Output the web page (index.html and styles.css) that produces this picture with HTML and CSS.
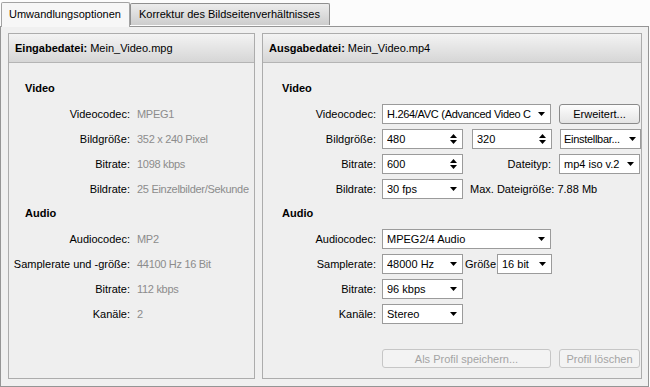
FILE: index.html
```html
<!DOCTYPE html>
<html lang="de">
<head>
  <meta charset="UTF-8" />
  <title>Umwandlungsoptionen</title>
  <link rel="stylesheet" href="styles.css">
</head>
<body>
  <!-- Tab strip -->
  <div class="tabs">
    <div class="tab active">Umwandlungsoptionen</div>
    <div class="tab">Korrektur des Bildseitenverhältnisses</div>
  </div>

  <div class="panel">
    <!-- Input file -->
    <section class="group group-in">
      <div class="group-head"><b>Eingabedatei:</b> Mein_Video.mpg</div>
      <div class="group-body">
        <div class="heading">Video</div>
        <div class="row"><span class="label">Videocodec:</span><span class="value">MPEG1</span></div>
        <div class="row"><span class="label">Bildgröße:</span><span class="value">352 x 240 Pixel</span></div>
        <div class="row"><span class="label">Bitrate:</span><span class="value">1098 kbps</span></div>
        <div class="row"><span class="label">Bildrate:</span><span class="value">25 Einzelbilder/Sekunde</span></div>
        <div class="heading">Audio</div>
        <div class="row"><span class="label">Audiocodec:</span><span class="value">MP2</span></div>
        <div class="row"><span class="label">Samplerate und -größe:</span><span class="value">44100 Hz 16 Bit</span></div>
        <div class="row"><span class="label">Bitrate:</span><span class="value">112 kbps</span></div>
        <div class="row"><span class="label">Kanäle:</span><span class="value">2</span></div>
      </div>
    </section>

    <!-- Output file -->
    <section class="group group-out">
      <div class="group-head"><b>Ausgabedatei:</b> Mein_Video.mp4</div>
      <div class="group-body">
        <div class="heading">Video</div>
        <div class="row">
          <span class="label">Videocodec:</span>
          <div class="controls">
            <div class="select w-wide"><span class="sel-text condensed">H.264/AVC (Advanced Video C</span><svg class="arrow" width="7" height="4"><path d="M0 0h7L3.5 4z"/></svg></div>
            <button class="btn w-btn">Erweitert...</button>
          </div>
        </div>
        <div class="row">
          <span class="label">Bildgröße:</span>
          <div class="controls">
            <div class="spin w-small"><span class="sel-text">480</span><span class="spin-arrows"><svg width="7" height="4"><path d="M3.5 0L7 4H0z"/></svg><svg width="7" height="4"><path d="M0 0h7L3.5 4z"/></svg></span></div>
            <div class="spin w-small2"><span class="sel-text">320</span><span class="spin-arrows"><svg width="7" height="4"><path d="M3.5 0L7 4H0z"/></svg><svg width="7" height="4"><path d="M0 0h7L3.5 4z"/></svg></span></div>
            <div class="select w-btn snug"><span class="sel-text condensed">Einstellbar...</span><svg class="arrow" width="7" height="4"><path d="M0 0h7L3.5 4z"/></svg></div>
          </div>
        </div>
        <div class="row">
          <span class="label">Bitrate:</span>
          <div class="controls">
            <div class="spin w-small"><span class="sel-text">600</span><span class="spin-arrows"><svg width="7" height="4"><path d="M3.5 0L7 4H0z"/></svg><svg width="7" height="4"><path d="M0 0h7L3.5 4z"/></svg></span></div>
            <span class="side-label">Dateityp:</span>
            <div class="select w-btn"><span class="sel-text">mp4 iso v.2</span><svg class="arrow" width="7" height="4"><path d="M0 0h7L3.5 4z"/></svg></div>
          </div>
        </div>
        <div class="row">
          <span class="label">Bildrate:</span>
          <div class="controls">
            <div class="select w-small"><span class="sel-text">30 fps</span><svg class="arrow" width="7" height="4"><path d="M0 0h7L3.5 4z"/></svg></div>
            <span class="note">Max. Dateigröße: 7.88 Mb</span>
          </div>
        </div>
        <div class="heading">Audio</div>
        <div class="row">
          <span class="label">Audiocodec:</span>
          <div class="controls">
            <div class="select w-wide"><span class="sel-text">MPEG2/4 Audio</span><svg class="arrow" width="7" height="4"><path d="M0 0h7L3.5 4z"/></svg></div>
          </div>
        </div>
        <div class="row">
          <span class="label">Samplerate:</span>
          <div class="controls tight">
            <div class="select w-small"><span class="sel-text">48000 Hz</span><svg class="arrow" width="7" height="4"><path d="M0 0h7L3.5 4z"/></svg></div>
            <span class="inline-label">Größe</span>
            <div class="select w-bits"><span class="sel-text">16 bit</span><svg class="arrow" width="7" height="4"><path d="M0 0h7L3.5 4z"/></svg></div>
          </div>
        </div>
        <div class="row">
          <span class="label">Bitrate:</span>
          <div class="controls">
            <div class="select w-small"><span class="sel-text">96 kbps</span><svg class="arrow" width="7" height="4"><path d="M0 0h7L3.5 4z"/></svg></div>
          </div>
        </div>
        <div class="row">
          <span class="label">Kanäle:</span>
          <div class="controls">
            <div class="select w-small"><span class="sel-text">Stereo</span><svg class="arrow" width="7" height="4"><path d="M0 0h7L3.5 4z"/></svg></div>
          </div>
        </div>
        <div class="actions">
          <button class="btn disabled w-wide">Als Profil speichern...</button>
          <button class="btn disabled w-btn">Profil löschen</button>
        </div>
      </div>
    </section>
  </div>
</body>
</html>
```

FILE: styles.css
```css
/* Reset and global settings */
* {
  margin: 0;
  padding: 0;
  box-sizing: border-box;
}
body {
  font-family: "Liberation Sans", Arial, sans-serif;
  font-size: 11px;
  color: #000;
  background-color: #fcfcfc;
  width: 650px;
  height: 387px;
  overflow: hidden;
}

/* Tabs */
.tabs {
  display: flex;
  align-items: flex-end;
  height: 26px;
  padding-left: 1px;
}
.tab {
  height: 22px;
  padding: 0 9px 0 8px;
  line-height: 21px;
  border: 1px solid #8f8f8f;
  border-bottom: none;
  border-radius: 2px 2px 0 0;
  background: linear-gradient(#ececec, #cdcdcd);
  white-space: nowrap;
  margin-bottom: 1px;
}
.tab.active {
  position: relative;
  z-index: 2;
  height: 25px;
  margin-bottom: -1px;
  padding: 0 8px 0 7px;
  line-height: 23px;
  background: #f7f7f7;
  border-color: #a3a3a3;
}

/* Tab panel */
.panel {
  display: flex;
  gap: 7px;
  width: 649px;
  height: 361px;
  padding: 6px 6px 7px 7px;
  background-color: #f0f0f0;
  border: 1px solid #959595;
}

/* Group boxes */
.group {
  display: flex;
  flex-direction: column;
  border: 1px solid #acacac;
  background-color: #efefef;
}
.group-in {
  width: 247px;
}
.group-out {
  width: 380px;
}
.group-head {
  height: 29px;
  line-height: 28px;
  padding-left: 6px;
  border-bottom: 1px solid #b4b4b4;
  background: linear-gradient(#f3f3f3, #d6d6d6);
  white-space: nowrap;
}
.group-body {
  flex: 1;
  display: flex;
  flex-direction: column;
  padding-top: 13px;
}
.heading {
  height: 25px;
  line-height: 25px;
  font-weight: bold;
}
.group-in .heading {
  padding-left: 16px;
}
.group-out .heading {
  padding-left: 19px;
}
.row {
  display: flex;
  align-items: center;
  height: 25px;
}
.label {
  flex-shrink: 0;
  text-align: right;
  white-space: nowrap;
}
.group-in .label {
  width: 121px;
  margin-right: 7px;
}
.group-out .label {
  width: 113px;
  margin-right: 6px;
}
.value {
  color: #8c8c8c;
  white-space: nowrap;
  letter-spacing: -0.3px;
}

/* Form controls */
.controls {
  display: flex;
  align-items: center;
  gap: 8px;
}
.controls.tight {
  gap: 0;
}
.select,
.spin {
  display: flex;
  align-items: center;
  height: 20px;
  padding: 0 5px 0 4px;
  border: 1px solid #9b9b9b;
  background-color: #fff;
  overflow: hidden;
}
.select.snug {
  padding: 0 4px 0 3px;
}
.sel-text {
  flex: 1;
  white-space: nowrap;
  overflow: hidden;
}
.sel-text.condensed {
  letter-spacing: -0.3px;
}
.arrow {
  flex-shrink: 0;
  margin-left: 3px;
}
.snug .arrow {
  margin-left: 1px;
}
.spin-arrows {
  display: flex;
  flex-direction: column;
  gap: 2px;
}
.w-wide {
  width: 169px;
}
.w-small {
  width: 81px;
}
.w-small2 {
  width: 80px;
  margin-left: 1px;
}
.w-btn {
  width: 81px;
}
.w-bits {
  width: 55px;
}
.side-label {
  width: 80px;
  text-align: right;
}
.inline-label {
  width: 34px;
  padding-left: 2px;
}
.note {
  margin-left: -1px;
}
.btn {
  height: 20px;
  padding: 0;
  font-family: inherit;
  font-size: 11px;
  border: 1px solid #8a8a8a;
  border-radius: 3px;
  background: linear-gradient(#fdfdfd, #e4e4e4);
  color: #000;
}
.btn.disabled {
  height: 19px;
  border-color: #c6c6c6;
  background: #f3f3f3;
  color: #a4a4a4;
}
.actions {
  display: flex;
  gap: 8px;
  margin-top: auto;
  padding: 0 0 10px 119px;
}
```
